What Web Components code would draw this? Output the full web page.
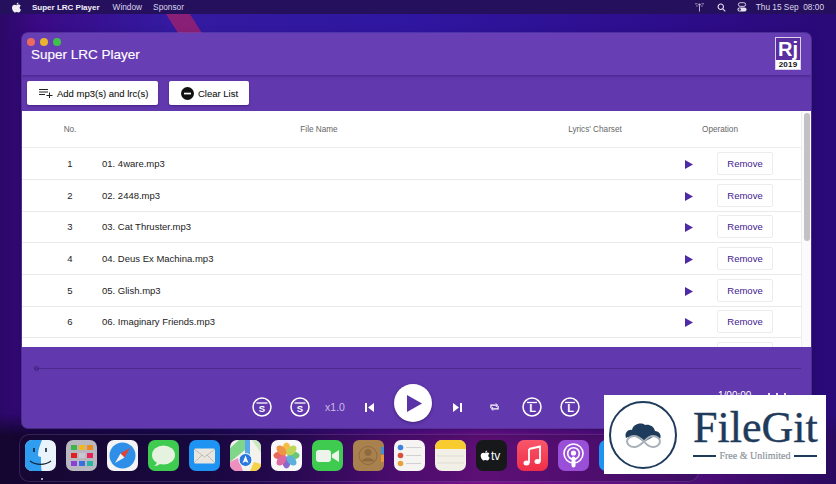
<!DOCTYPE html>
<html>
<head>
<meta charset="utf-8">
<title>Super LRC Player</title>
<style>
  html, body { margin: 0; padding: 0; }
  body { width: 836px; height: 484px; overflow: hidden; font-family: "Liberation Sans", Arial, sans-serif; }
</style>
</head>
<body>
<mac-desktop>
  <menu-bar slot="menu"></menu-bar>
  <player-window slot="window">
    <title-bar slot="title"></title-bar>
    <tool-bar slot="tools"></tool-bar>
    <track-table slot="table"></track-table>
    <player-bar slot="player"></player-bar>
  </player-window>
  <app-dock slot="dock"></app-dock>
  <filegit-badge slot="badge"></filegit-badge>
</mac-desktop>

<script>
class MacDesktop extends HTMLElement {
  constructor() {
    super();
    this.attachShadow({mode: 'open'});
    this.shadowRoot.innerHTML = `
      <style>
        :host {
          display: block; position: relative; width: 836px; height: 484px; overflow: hidden;
          background:
            linear-gradient(90deg, #2c0868 0, #3a0a86 40px, #331aa0 170px, #2f16a0 420px, #2d0c88 700px, #2a0a78 100%);
        }
        .streak {
          position: absolute; left: 160px; top: 14px; width: 50px; height: 19px;
          background: #8a1f78; clip-path: polygon(6px 0, 30px 0, 42px 19px, 18px 19px);
        }
        .top { position: absolute; left: 0; right: 0; top: 0; height: 14px; background: #24105c; }
        .floor {
          position: absolute; left: 0; right: 0; bottom: 0; height: 70px;
          background: linear-gradient(90deg, #14062f 0, #160640 24%, #2a0858 34%, #5a0c80 46%, #7a108e 58%, #5a0e80 76%, #2a0a60 100%);
          -webkit-mask-image: linear-gradient(180deg, transparent 0, #000 22px);
        }
        ::slotted([slot=window]) { position: absolute; left: 22px; top: 33px; }
        ::slotted([slot=dock]) { position: absolute; left: 19px; top: 434px; }
        ::slotted([slot=badge]) { position: absolute; left: 604px; top: 395px; }
        ::slotted([slot=menu]) { position: relative; }
      </style>
      <div class="top"></div>
      <div class="streak"></div>
      <div class="floor"></div>
      <slot name="menu"></slot>
      <slot name="window"></slot>
      <slot name="dock"></slot>
      <slot name="badge"></slot>`;
  }
}

class MenuBar extends HTMLElement {
  constructor() {
    super();
    this.attachShadow({mode: 'open'});
    this.shadowRoot.innerHTML = `
      <style>
        :host {
          display: flex; align-items: center; height: 14px; padding: 0 12px 0 12px;
          color: #dcd6ee; font-size: 8.300px;
        }
        .apple { width: 9px; height: 11px; margin-right: 11px; }
        b { font-size: 8px; font-weight: 700; color: #f4f0fa; margin-right: 13px; }
        span { margin-right: 11px; }
        .right { margin-left: auto; display: flex; align-items: center; }
        .right span { margin: 0; }
        svg { display: block; }
      </style>
      <svg class="apple" viewBox="0 0 18 22"><path fill="#f2eef8" d="M13 1c.2 2-1.800 4.300-4 4.200C8.800 3.200 11 1 13 1zM9.200 6.400c1 0 2.400-1.200 4.300-1.200 1.300 0 3 .7 4 2.200-3.300 2-2.800 6.600.5 8-1 2.600-2.900 5.600-4.900 5.600-1.200 0-2-.8-3.500-.8s-2.300.8-3.500.8C3.600 21 0 15.600 0 11.400 0 7.400 2.600 5.300 5 5.300c1.800 0 3.200 1.100 4.200 1.100z"/></svg>
      <b>Super LRC Player</b><span>Window</span><span>Sponsor</span>
      <div class="right">
        <svg style="margin-right:13px" width="9" height="10" viewBox="0 0 9 10"><circle cx="4.500" cy="2.600" r="1.200" fill="#b9b2d2"/><path d="M4.500 3.500v6" stroke="#b9b2d2"/><path d="M0 1.800h2.500M6.500 1.800H9M1.200 4h1.600M6.200 4h1.600" stroke="#b9b2d2" stroke-width=".8"/></svg>
        <svg style="margin-right:11px" width="9" height="9" viewBox="0 0 10 10" fill="none" stroke="#e6e2f2" stroke-width="1.200"><circle cx="4.200" cy="4.200" r="3"/><path d="M6.500 6.500 9.200 9.200"/></svg>
        <svg style="margin-right:9px" width="10" height="10" viewBox="0 0 11 11"><rect x="1.500" y="0.800" width="8" height="4" rx="2" fill="none" stroke="#e6e2f2"/><rect x="0.500" y="6" width="10" height="4.500" rx="2.200" fill="#e6e2f2"/><circle cx="3" cy="8.200" r="1.300" fill="#3a2570"/></svg>
        <span>Thu 15 Sep&nbsp; 08:00</span>
      </div>`;
  }
}

class PlayerWindow extends HTMLElement {
  constructor() {
    super();
    this.attachShadow({mode: 'open'});
    this.shadowRoot.innerHTML = `
      <style>
        :host {
          display: flex; flex-direction: column; width: 789px; height: 395px;
          background: #6238ae; border-radius: 6px; overflow: hidden;
          box-shadow: 0 0 0 1px rgba(130,100,200,.4), 0 5px 12px rgba(10,0,40,.35);
        }
      </style>
      <slot name="title"></slot>
      <slot name="tools"></slot>
      <slot name="table"></slot>
      <slot name="player"></slot>`;
  }
}

class TitleBar extends HTMLElement {
  constructor() {
    super();
    this.attachShadow({mode: 'open'});
    this.shadowRoot.innerHTML = `
      <style>
        :host {
          display: flex; align-items: center; justify-content: space-between; position: relative;
          height: 42px; box-sizing: border-box; padding: 0 10px 0 9px;
          background: #683eb4; box-shadow: 0 1px 3px rgba(50,20,110,.6); z-index: 1;
        }
        .lights { position: absolute; left: 5px; top: 5px; display: flex; gap: 5px; }
        .lights i { width: 8px; height: 8px; border-radius: 50%; display: block; }
        h1 { margin: 0; font-size: 13.500px; font-weight: 400; color: #fff; -webkit-text-stroke: .15px #fff; }
        .rj { width: 26px; height: 33px; margin-top: -1px; background: #5a2e9e; border: 1px solid #d9d0ec; box-sizing: border-box; display: flex; flex-direction: column; }
        .rj b { flex: 1; color: #fff; font-size: 20px; line-height: 22px; text-align: center; }
        .rj span { background: #fff; color: #111; font-size: 8px; font-weight: 700; line-height: 9px; text-align: center; letter-spacing: .2px; }
      </style>
      <div class="lights"><i style="background:#ef6a5e"></i><i style="background:#e8b32f"></i><i style="background:#3fc14c"></i></div>
      <h1>Super LRC Player</h1>
      <div class="rj"><b>Rj</b><span>2019</span></div>`;
  }
}

class ToolBar extends HTMLElement {
  constructor() {
    super();
    this.attachShadow({mode: 'open'});
    this.shadowRoot.innerHTML = `
      <style>
        :host { display: flex; align-items: flex-start; gap: 11px; height: 36px; box-sizing: border-box; padding: 6px 0 0 5px; background: #6238ae; }
        button {
          display: flex; align-items: center; gap: 4px; height: 24px; box-sizing: border-box; border: 0; border-radius: 2px; background: #fff;
          color: #111; font: 9.500px "Liberation Sans", sans-serif; -webkit-text-stroke: .08px #111; padding: 0 0 0 12px; box-shadow: 0 1px 2px rgba(40,10,90,.5);
        }
        .add { width: 131px; }
        .clear { width: 80px; }
      </style>
      <button class="add">
        <svg width="14" height="10" viewBox="0 0 14 10" fill="none" stroke="#222" stroke-width="1"><path d="M0 1.500h9M0 4h9M0 6.500h6M7.500 7.500h6M10.500 4.500v5.500"/></svg>
        Add mp3(s) and lrc(s)
      </button>
      <button class="clear">
        <svg width="13" height="13" viewBox="0 0 13 13"><circle cx="6.500" cy="6.500" r="6.500" fill="#111"/><rect x="3" y="5.700" width="7" height="1.700" fill="#fff"/></svg>
        Clear List
      </button>`;
  }
}

class TrackTable extends HTMLElement {
  constructor() {
    super();
    this.attachShadow({mode: 'open'});
    this.shadowRoot.innerHTML = `
      <style>
        :host { display: block; position: relative; height: 236px; background: #fff; overflow: hidden; }
        .head {
          display: grid; grid-template-columns: 96px 402px 150px 100px; width: 779px; height: 37.300px; align-items: center;
          color: #666; font-size: 8.200px; text-align: center; border-bottom: 1px solid #ececf0; box-sizing: border-box;
        }
        .bar { position: absolute; right: 0; top: 0; bottom: 0; width: 10px; background: #fbfbfb; border-left: 1px solid #eeeeee; box-sizing: border-box; }
        .thumb { position: absolute; right: 1px; top: 2px; width: 6px; height: 128px; border-radius: 3px; background: #c2c2c4; }
        .rows { display: flex; flex-direction: column; }
      </style>
      <div class="head"><div>No.</div><div>File Name</div><div>Lyrics' Charset</div><div>Operation</div></div>
      <div class="rows" id="rows"></div>
      <div class="bar"><div class="thumb"></div></div>`;
    const tracks = ['01. 4ware.mp3', '02. 2448.mp3', '03. Cat Thruster.mp3', '04. Deus Ex Machina.mp3',
      '05. Glish.mp3', '06. Imaginary Friends.mp3', ''];
    const rows = this.shadowRoot.getElementById('rows');
    tracks.forEach((name, i) => {
      const row = document.createElement('track-row');
      row.setAttribute('no', name ? i + 1 : '');
      row.setAttribute('name', name);
      rows.appendChild(row);
    });
  }
}

class TrackRow extends HTMLElement {
  constructor() {
    super();
    this.attachShadow({mode: 'open'});
  }
  connectedCallback() {
    const name = this.getAttribute('name');
    this.shadowRoot.innerHTML = `
      <style>
        :host {
          display: grid; grid-template-columns: 80px 583px 32px 56px; align-items: center; width: 779px; height: 31.670px; box-sizing: border-box;
          border-bottom: 1px solid #e9e9ec; color: #1c1c1c; font-size: 9.500px; flex: none;
        }
        .n { text-align: center; padding-left: 16px; }
        .p { display: block; margin: 2px 0 0 0; }
        button {
          width: 56px; height: 23px; border: 1px solid #ececef; border-radius: 2px; background: #fff; color: #3f2090;
          font: 9.500px "Liberation Sans", sans-serif; padding: 0;
        }
      </style>
      <div class="n">${this.getAttribute('no')}</div>
      <div>${name}</div>
      <svg class="p" width="8" height="9" viewBox="0 0 8 9"><path d="M0 0l8 4.500L0 9z" fill="#4f2aa6"/></svg>
      <button>${name ? 'Remove' : ''}</button>`;
  }
}

class PlayerBar extends HTMLElement {
  constructor() {
    super();
    this.attachShadow({mode: 'open'});
    const s = `<svg width="20" height="20" viewBox="0 0 20 20" fill="none" stroke="#fff"><circle cx="10" cy="10" r="9" stroke-width="1.500"/><path d="M4.500 6h11" stroke-width="1.300"/><text x="10" y="15" text-anchor="middle" fill="#fff" stroke="none" font-size="9.500" font-weight="700" font-family="Liberation Sans">S</text></svg>`;
    const l = `<svg width="20" height="20" viewBox="0 0 20 20" fill="none" stroke="#fff"><circle cx="10" cy="10" r="9" stroke-width="1.500"/><path d="M5 5.500h10" stroke-width="1.300"/><text x="10.500" y="15" text-anchor="middle" fill="#fff" stroke="none" font-size="11" font-weight="700" font-family="Liberation Sans">L</text></svg>`;
    this.shadowRoot.innerHTML = `
      <style>
        :host { display: block; position: relative; height: 81px; box-sizing: border-box; padding-top: 21px; background: #6238ae; }
        .track { height: 1px; margin: 0 10px 0 13px; background: #4b2a8c; position: relative; }
        .track i { position: absolute; left: -1px; top: -2px; width: 3px; height: 3px; border: 1px solid #3d2078; border-radius: 50%; }
        .ctl { display: flex; align-items: center; margin: 15px 0 0 230px; }
        .ctl > * { flex: none; }
        .x { color: #cbbce8; font-size: 10.500px; width: 24px; margin-left: 13px; text-align: center; }
        .big { width: 38px; height: 38px; margin-bottom: 8px; border-radius: 50%; background: #fff; display: flex; align-items: center; justify-content: center; box-shadow: 0 1px 3px rgba(30,5,70,.5); }
        .big svg { margin-left: 3px; }
        .time { position: absolute; left: 696px; top: 43px; color: #fff; font-size: 10px; }
        .bits { position: absolute; left: 746px; top: 46px; display: flex; gap: 6px; }
        .bits i { display: block; width: 2px; height: 3px; background: #e8e0f6; }
      </style>
      <div class="track"><i></i></div>
      <div class="ctl">
        ${s}<span style="width:18px"></span>${s}
        <span class="x">x1.0</span>
        <svg style="margin-left:18px" width="9" height="9" viewBox="0 0 9 9" fill="#fff"><rect width="2" height="9"/><path d="M9 0v9L3 4.500z"/></svg>
        <span style="width:20px"></span>
        <div class="big"><svg width="15" height="17" viewBox="0 0 15 17"><path d="M0 0l15 8.500L0 17z" fill="#5a33a8"/></svg></div>
        <span style="width:21px"></span>
        <svg width="9" height="9" viewBox="0 0 9 9" fill="#fff"><path d="M0 0v9l6-4.500z"/><rect x="7" width="2" height="9"/></svg>
        <span style="width:28px"></span>
        <svg width="9" height="8" viewBox="0 0 10 8" fill="none" stroke="#fff" stroke-width="1.300"><path d="M1 5V2h7M9 3v3H2"/><path d="M6.500 0l2 2-2 2M3.500 4l-2 2 2 2" stroke-width="1"/></svg>
        <span style="width:23px"></span>
        ${l}<span style="width:18px"></span>${l}
      </div>
      <div class="time">1/00:00</div>
      <div class="bits"><i></i><i></i><i></i></div>`;
  }
}

class AppDock extends HTMLElement {
  constructor() {
    super();
    this.attachShadow({mode: 'open'});
    this.shadowRoot.innerHTML = `
      <style>
        :host {
          display: flex; gap: 10px; width: 680px; height: 48px; box-sizing: border-box; padding: 5px 0 0 5px;
          border: 1px solid rgba(160,130,200,.22); border-radius: 10px; background: rgba(30,12,60,.3);
        }
        svg { display: block; width: 31px; height: 31px; flex: none; }
        .dot { position: absolute; left: 21px; top: 43px; width: 2px; height: 2px; border-radius: 50%; background: #ddd; }
      </style>
      <svg viewBox="0 0 31 31"><rect width="31" height="31" rx="7" fill="#eaf2fb"/><path d="M7 0h10c-2 5-4 10-4 15 0 1 1 2 3 2-.2 4 0 9 .6 14H7a7 7 0 0 1-7-7V7a7 7 0 0 1 7-7z" fill="#2f9df0"/><path d="M9 8v4M21 8v4" stroke="#123" stroke-width="1.600"/><path d="M5 21c6 4.500 15 4.500 21 0" stroke="#123" fill="none" stroke-width="1.200"/></svg>
      <svg viewBox="0 0 31 31"><rect width="31" height="31" rx="7" fill="#b9b7bf"/><g id="g"><rect x="5" y="5" width="6" height="5" fill="#3fb44a"/><rect x="13" y="5" width="6" height="5" fill="#f3b520"/><rect x="21" y="5" width="6" height="5" fill="#ef8a1e"/><rect x="5" y="13" width="6" height="5" fill="#de2222"/><rect x="13" y="13" width="6" height="5" fill="#c8c8d0"/><rect x="21" y="13" width="6" height="5" fill="#e6245a"/><rect x="5" y="21" width="6" height="5" fill="#8a3fd8"/><rect x="13" y="21" width="6" height="5" fill="#3a6fe0"/><rect x="21" y="21" width="6" height="5" fill="#25b6a8"/></g></svg>
      <svg viewBox="0 0 31 31"><rect width="31" height="31" rx="7" fill="#f4f4f6"/><circle cx="15.500" cy="15.500" r="13" fill="#2f8fe8"/><path d="M23 8 13.500 13.500l4 4z" fill="#e8402c"/><path d="M8 23l5.500-9.500 4 4z" fill="#f2f2f2"/></svg>
      <svg viewBox="0 0 31 31"><rect width="31" height="31" rx="7" fill="#3ecb4f"/><ellipse cx="15.500" cy="15" rx="11.500" ry="9.500" fill="#e6f2e0"/><path d="M9 21c0 2-1 4-3 5 3 0 5-1 7-3z" fill="#e6f2e0"/></svg>
      <svg viewBox="0 0 31 31"><rect width="31" height="31" rx="7" fill="#1f93f2"/><rect x="5" y="8.500" width="21" height="15" rx="1.500" fill="#e9e6e0"/><path d="M5 9l10.500 8L26 9M5 23l8-8M26 23l-8-8" fill="none" stroke="#b5b3ae" stroke-width=".8"/></svg>
      <svg viewBox="0 0 31 31"><rect width="31" height="31" rx="7" fill="#f4f2ec"/><path d="M0 8 9 0h6v10L0 22z" fill="#7fd68a"/><path d="M15 0h5v18h-5z" fill="#5aa9ee"/><path d="M22 0h2a7 7 0 0 1 7 7v6z" fill="#c8e8c0"/><path d="M0 22l8-4 5 13H7a7 7 0 0 1-7-7z" fill="#ef8fc0"/><path d="M24 22l7 2v0a7 7 0 0 1-7 7h-4z" fill="#f6d24a"/><circle cx="15.500" cy="20" r="6.500" fill="#2b78dc" stroke="#fff"/><path d="M15.500 15.500l3 7.500-3-1.500-3 1.500z" fill="#fff"/></svg>
      <svg viewBox="0 0 31 31"><rect width="31" height="31" rx="7" fill="#f8f8f8"/><g opacity=".9"><ellipse cx="15.500" cy="8.500" rx="3.800" ry="6" fill="#f6b733"/><ellipse cx="15.500" cy="22.500" rx="3.800" ry="6" fill="#7c5bc8"/><ellipse cx="8.500" cy="15.500" rx="6" ry="3.800" fill="#e8574c"/><ellipse cx="22.500" cy="15.500" rx="6" ry="3.800" fill="#5cc26a"/><ellipse cx="10.500" cy="10.500" rx="3.800" ry="6" transform="rotate(-45 10.500 10.500)" fill="#ef8a34"/><ellipse cx="20.500" cy="10.500" rx="3.800" ry="6" transform="rotate(45 20.500 10.500)" fill="#b8d24a"/><ellipse cx="10.500" cy="20.500" rx="3.800" ry="6" transform="rotate(45 10.500 20.500)" fill="#d85a9c"/><ellipse cx="20.500" cy="20.500" rx="3.800" ry="6" transform="rotate(-45 20.500 20.500)" fill="#4fa8d8"/></g></svg>
      <svg viewBox="0 0 31 31"><rect width="31" height="31" rx="7" fill="#3ecb4f"/><rect x="4" y="10" width="15" height="12" rx="3" fill="#eef4ec"/><path d="M20 14.500l7-4.500v12l-7-4.500z" fill="#eef4ec"/></svg>
      <svg viewBox="0 0 31 31"><rect width="31" height="31" rx="6" fill="#a9814f"/><rect x="28" y="7" width="3" height="7" fill="#3f8ed8"/><rect x="28" y="15" width="3" height="7" fill="#e8943a"/><circle cx="15" cy="15.500" r="9" fill="none" stroke="#8f6a3e"/><circle cx="15" cy="12.500" r="3.500" fill="#8f6a3e"/><path d="M8.500 21.500c2-5 11-5 13 0" fill="#8f6a3e"/></svg>
      <svg viewBox="0 0 31 31"><rect width="31" height="31" rx="7" fill="#f5f4f2"/><circle cx="6.500" cy="7.500" r="2.800" fill="#3a84e0"/><circle cx="6.500" cy="15.500" r="2.800" fill="#d6503c"/><circle cx="6.500" cy="23.500" r="2.800" fill="#e8a23a"/><path d="M12 7.500h15M12 15.500h15M12 23.500h15" stroke="#c8c8c8" stroke-width=".8"/></svg>
      <svg viewBox="0 0 31 31"><rect width="31" height="31" rx="7" fill="#f2efe6"/><path d="M0 9V7a7 7 0 0 1 7-7h17a7 7 0 0 1 7 7v2z" fill="#f8cb2e"/><path d="M2 16h27M2 23h27" stroke="#d8d5cc" stroke-width=".7"/></svg>
      <svg viewBox="0 0 31 31"><rect width="31" height="31" rx="7" fill="#16181a"/><path d="M8.200 9.500c.1 1.200-1 2.300-2.100 2.300-.1-1.100 1-2.300 2.100-2.300zm-1.900 2.700c.5 0 1.200-.6 2.100-.6.700 0 1.500.4 2 1.100-1.700 1-1.400 3.300.3 4-.5 1.300-1.500 2.800-2.400 2.800-.6 0-1-.4-1.800-.4s-1.100.4-1.700.4c-1.300 0-3.100-2.700-3.100-4.800 0-2 1.300-3 2.500-3 .8 0 1.500.5 2.100.5z" fill="#fff" transform="translate(3 1)"/><text x="15" y="20" fill="#fff" font-size="12" font-family="Liberation Sans">tv</text></svg>
      <svg viewBox="0 0 31 31"><defs><linearGradient id="m" x1="0" y1="0" x2="0" y2="1"><stop offset="0" stop-color="#f9566a"/><stop offset="1" stop-color="#ef2f47"/></linearGradient></defs><rect width="31" height="31" rx="7" fill="url(#m)"/><path d="M12 9l11-2.500v15" fill="none" stroke="#fff" stroke-width="1.800"/><path d="M12 9v14" stroke="#fff" stroke-width="1.800"/><ellipse cx="9.500" cy="23" rx="3" ry="2.500" fill="#fff"/><ellipse cx="20.500" cy="21.500" rx="3" ry="2.500" fill="#fff"/></svg>
      <svg viewBox="0 0 31 31"><rect width="31" height="31" rx="7" fill="#9a4fd8"/><circle cx="15.500" cy="13.500" r="9.500" fill="none" stroke="#fff" stroke-width="1.600"/><circle cx="15.500" cy="13.500" r="5.800" fill="none" stroke="#fff" stroke-width="1.600"/><circle cx="15.500" cy="13" r="2.600" fill="#fff"/><rect x="13.500" y="16.500" width="4" height="11" rx="2" fill="#fff"/></svg>
      <svg viewBox="0 0 31 31"><rect width="31" height="31" rx="7" fill="#1f93f2"/></svg>
      <div class="dot"></div>`;
  }
}

class FilegitBadge extends HTMLElement {
  constructor() {
    super();
    this.attachShadow({mode: 'open'});
    this.shadowRoot.innerHTML = `
      <style>
        :host { display: flex; align-items: center; width: 222px; height: 79px; background: #fff; box-sizing: border-box; padding-left: 5px; color: #1f3b5c; }
        .logo { width: 68px; height: 68px; flex: none; }
        .txt { margin-left: 16px; width: 124px; }
        .name { font: 400 44px/40px "Liberation Serif", serif; white-space: nowrap; -webkit-text-stroke: .4px #1f3b5c; }
        .sub { display: flex; align-items: center; gap: 3px; margin-top: 3px; font: 400 10px/10px "Liberation Serif", serif; color: #8d949c; white-space: nowrap; -webkit-text-stroke: .2px #8d949c; }
        .sub i { flex: 1; height: 2px; background: #1f3b5c; }
      </style>
      <svg class="logo" viewBox="0 0 68 68">
        <circle cx="34" cy="34" r="33" fill="none" stroke="#1f3b5c" stroke-width="2"/>
        <path d="M17 37c-2-6 3-9 6-8 1-6 9-8 13-5 4-1 9 1 10 6 4 0 7 4 5 8-3-3-6-3-9-1l-7 4-6-4c-3-2-8-2-12 0z" fill="#1f3b5c"/>
        <path d="M25 35c-4 0-7 3-7 5.500S21 46 25 46s7-2.500 10-5.500 5-5.500 9-5.500 7 3 7 5.500-3 5.500-7 5.500-7-3-9-5.500c-3-3-6-5.500-10-5.500z" fill="none" stroke="#a9b0b8" stroke-width="2"/>
      </svg>
      <div class="txt">
        <div class="name">FileGit</div>
        <div class="sub"><i></i>Free &amp; Unlimited<i></i></div>
      </div>`;
  }
}

customElements.define('mac-desktop', MacDesktop);
customElements.define('menu-bar', MenuBar);
customElements.define('player-window', PlayerWindow);
customElements.define('title-bar', TitleBar);
customElements.define('tool-bar', ToolBar);
customElements.define('track-table', TrackTable);
customElements.define('track-row', TrackRow);
customElements.define('player-bar', PlayerBar);
customElements.define('app-dock', AppDock);
customElements.define('filegit-badge', FilegitBadge);
</script>
</body>
</html>
